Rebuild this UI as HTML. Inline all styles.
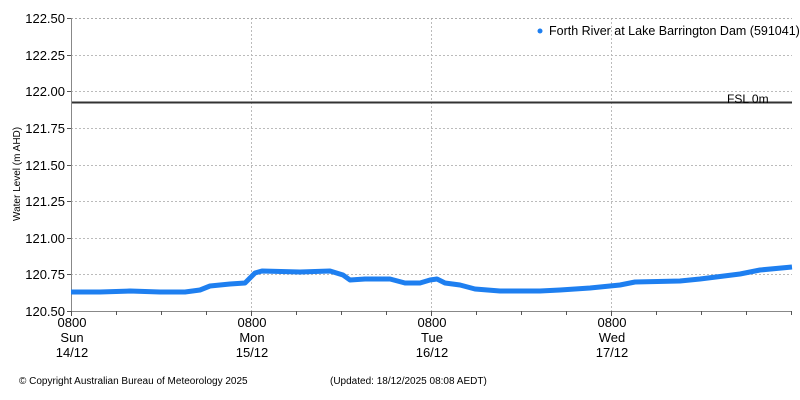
<!DOCTYPE html>
<html><head><style>
body{margin:0;background:#fff;width:800px;height:400px;overflow:hidden}
svg{display:block}
text{font-family:"Liberation Sans",sans-serif;fill:#000}
</style></head><body>
<svg width="800" height="400" viewBox="0 0 800 400">
<g stroke="#bbb" stroke-dasharray="2,2" stroke-width="1">
<line x1="71" y1="55.5" x2="792" y2="55.5"/><line x1="71" y1="91.5" x2="792" y2="91.5"/>
<line x1="71" y1="128.5" x2="792" y2="128.5"/><line x1="71" y1="165.5" x2="792" y2="165.5"/>
<line x1="71" y1="201.5" x2="792" y2="201.5"/><line x1="71" y1="238.5" x2="792" y2="238.5"/>
<line x1="71" y1="274.5" x2="792" y2="274.5"/>
<line x1="251.5" y1="18" x2="251.5" y2="311"/><line x1="431.5" y1="18" x2="431.5" y2="311"/>
<line x1="611.5" y1="18" x2="611.5" y2="311"/>
</g>
<line x1="71" y1="18.5" x2="792" y2="18.5" stroke="#aaa" stroke-dasharray="2,2"/>
<line x1="71.5" y1="18" x2="71.5" y2="311" stroke="#888"/>
<line x1="71" y1="311.5" x2="792" y2="311.5" stroke="#888"/>
<g stroke="#555">
<line x1="67" y1="18.5" x2="71" y2="18.5"/><line x1="67" y1="55.5" x2="71" y2="55.5"/><line x1="67" y1="91.5" x2="71" y2="91.5"/><line x1="67" y1="128.5" x2="71" y2="128.5"/><line x1="67" y1="165.5" x2="71" y2="165.5"/><line x1="67" y1="201.5" x2="71" y2="201.5"/><line x1="67" y1="238.5" x2="71" y2="238.5"/><line x1="67" y1="274.5" x2="71" y2="274.5"/><line x1="67" y1="311.5" x2="71" y2="311.5"/>
<line x1="71.5" y1="311" x2="71.5" y2="316"/><line x1="116.5" y1="311" x2="116.5" y2="315"/><line x1="161.5" y1="311" x2="161.5" y2="315"/><line x1="206.5" y1="311" x2="206.5" y2="315"/><line x1="251.5" y1="311" x2="251.5" y2="316"/><line x1="296.5" y1="311" x2="296.5" y2="315"/><line x1="341.5" y1="311" x2="341.5" y2="315"/><line x1="386.5" y1="311" x2="386.5" y2="315"/><line x1="431.5" y1="311" x2="431.5" y2="316"/><line x1="476.5" y1="311" x2="476.5" y2="315"/><line x1="521.5" y1="311" x2="521.5" y2="315"/><line x1="566.5" y1="311" x2="566.5" y2="315"/><line x1="611.5" y1="311" x2="611.5" y2="316"/><line x1="656.5" y1="311" x2="656.5" y2="315"/><line x1="701.5" y1="311" x2="701.5" y2="315"/><line x1="746.5" y1="311" x2="746.5" y2="315"/><line x1="791.5" y1="311" x2="791.5" y2="315"/>
</g>
<line x1="72" y1="102.5" x2="792" y2="102.5" stroke="#333" stroke-width="2"/>
<text x="727" y="103" font-size="12">FSL 0m</text>
<polyline fill="none" stroke="#1e7ff0" stroke-width="5" stroke-linejoin="round" points="71,292 100,292 130,291 160,292 185,292 200,290 210,286 230,284 245,283 249,279 255,273 262,271 300,272 330,271 343,275 350,280 365,279 390,279 405,283 420,283 430,280 437,279 445,283 460,285 475,289 500,291 540,291 560,290 590,288 620,285 635,282 680,281 700,279 740,274 760,270 792,267"/>
<circle cx="540" cy="31" r="2.5" fill="#1e7ff0"/>
<text x="549" y="35" font-size="12.5">Forth River at Lake Barrington Dam (591041)</text>
<g font-size="13" text-anchor="end">
<text x="65" y="23">122.50</text><text x="65" y="60">122.25</text><text x="65" y="96">122.00</text><text x="65" y="133">121.75</text><text x="65" y="170">121.50</text><text x="65" y="206">121.25</text><text x="65" y="243">121.00</text><text x="65" y="279">120.75</text><text x="65" y="316">120.50</text>
</g>
<text transform="translate(20,221) rotate(-90)" font-size="10" font-family="Liberation Mono,monospace">Water Level (m AHD)</text>
<g font-size="13" text-anchor="middle">
<text x="72" y="327">0800</text><text x="72" y="342">Sun</text><text x="72" y="357">14/12</text>
<text x="252" y="327">0800</text><text x="252" y="342">Mon</text><text x="252" y="357">15/12</text>
<text x="432" y="327">0800</text><text x="432" y="342">Tue</text><text x="432" y="357">16/12</text>
<text x="612" y="327">0800</text><text x="612" y="342">Wed</text><text x="612" y="357">17/12</text>
</g>
<text x="19" y="384" font-size="10">© Copyright Australian Bureau of Meteorology 2025</text>
<text x="330" y="384" font-size="10">(Updated: 18/12/2025 08:08 AEDT)</text>
</svg>
</body></html>
